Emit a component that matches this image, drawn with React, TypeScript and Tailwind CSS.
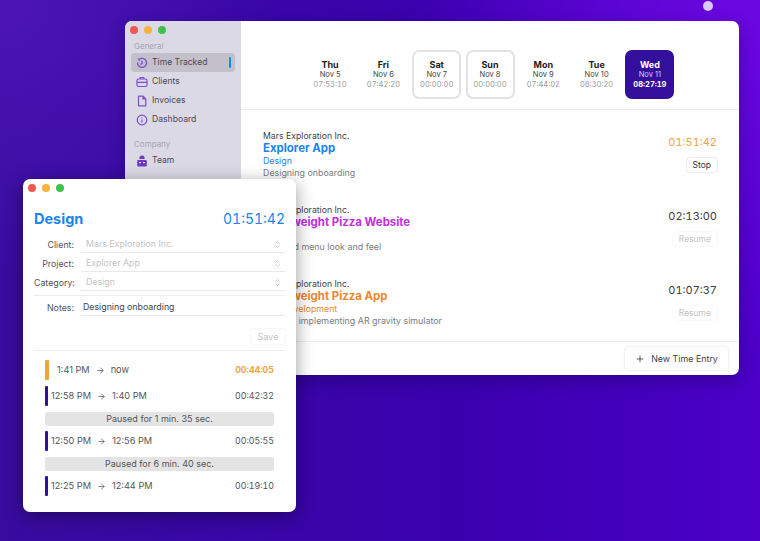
import { ChevronsUpDown, ArrowRight, Plus } from "lucide-react";

const days = [
  { d: "Thu", n: "Nov 5", t: "07:53:10" },
  { d: "Fri", n: "Nov 6", t: "07:42:20" },
  { d: "Sat", n: "Nov 7", t: "00:00:00", off: true },
  { d: "Sun", n: "Nov 8", t: "00:00:00", off: true },
  { d: "Mon", n: "Nov 9", t: "07:44:02" },
  { d: "Tue", n: "Nov 10", t: "08:30:20" },
  { d: "Wed", n: "Nov 11", t: "08:27:19", active: true },
];

const entries = [
  { client: "Mars Exploration Inc.", project: "Explorer App", color: "text-[#1b84ec]", cat: "Design", note: "Designing onboarding", time: "01:51:42", timeColor: "text-[#efa445]", btn: "Stop" },
  { client: "Mars Exploration Inc.", project: "Lightweight Pizza Website", color: "text-[#c42de0]", cat: "", note: "Updated menu look and feel", time: "02:13:00", timeColor: "text-[#3c3c3c]", btn: "Resume" },
  { client: "Mars Exploration Inc.", project: "Lightweight Pizza App", color: "text-[#f0862c]", cat: "App Development", note: "Testing, implementing AR gravity simulator", time: "01:07:37", timeColor: "text-[#3c3c3c]", btn: "Resume" },
];

const segments = [
  { from: "12:58 PM", to: "1:40 PM", time: "00:42:32", pause: "Paused for 1 min. 35 sec." },
  { from: "12:50 PM", to: "12:56 PM", time: "00:05:55", pause: "Paused for 6 min. 40 sec." },
  { from: "12:25 PM", to: "12:44 PM", time: "00:19:10", pause: "" },
];

function Lights() {
  return (
    <div className="flex gap-[6px]">
      <span className="w-[8px] h-[8px] rounded-full bg-[#f0584f]" />
      <span className="w-[8px] h-[8px] rounded-full bg-[#f5b33f]" />
      <span className="w-[8px] h-[8px] rounded-full bg-[#3fc14d]" />
    </div>
  );
}

function ClockIcon() {
  return (
    <svg width="12" height="12" viewBox="0 0 12 12" fill="none" stroke="#7c4fd0" strokeWidth="1.3">
      <path d="M3 2.6A4.5 4.5 0 1 1 1.6 5.4" />
      <path d="M1.7 1.6L3.4 2.4L3 4.2" strokeWidth="1" />
      <path d="M6 3.8V6.5L4.4 7.4" />
    </svg>
  );
}
function BriefcaseIcon() {
  return (
    <svg width="12" height="12" viewBox="0 0 12 12" fill="none" stroke="#7c4fd0" strokeWidth="1.2">
      <rect x="1" y="3" width="10" height="7.5" rx="1.5" />
      <path d="M1 6.3H11M4.2 3V1.6H7.8V3" />
    </svg>
  );
}
function DocIcon() {
  return (
    <svg width="12" height="12" viewBox="0 0 12 12" fill="none" stroke="#7c4fd0" strokeWidth="1.2">
      <path d="M2.5 1.2H7.2L9.8 3.8V10.8H2.5Z" strokeLinejoin="round" />
      <path d="M7 1.2V4H9.8" fill="#7c4fd0" />
    </svg>
  );
}
function GaugeIcon() {
  return (
    <svg width="12" height="12" viewBox="0 0 12 12" fill="none" stroke="#7c4fd0" strokeWidth="1.2">
      <circle cx="6" cy="6" r="4.8" />
      <path d="M6 5.5V8.4M6 3.6V4.2" />
    </svg>
  );
}
function TeamIcon() {
  return (
    <svg width="12" height="13" viewBox="0 0 12 13" fill="#6a3cc4">
      <path d="M3.4 4.2a2.6 2.6 0 0 1 5.2 0V5H3.4Z" />
      <rect x="1.2" y="6" width="9.6" height="6.4" rx="1" />
      <rect x="3" y="8" width="2" height="1.2" fill="#dcd9e6" />
      <rect x="7" y="8" width="2" height="1.2" fill="#dcd9e6" />
    </svg>
  );
}

function NavItem({ icon, label, active }: { icon: React.ReactNode; label: string; active?: boolean }) {
  return (
    <div className={`h-[19px] mx-[6px] pl-[5px] pr-[4px] rounded-[4px] flex items-center gap-[4px] text-[8.6px] text-[#4b4953] ${active ? "bg-[#c3c0cb]" : ""}`}>
      <span className="w-[12px] flex justify-center">{icon}</span>
      <span className="flex-1">{label}</span>
      {active && <span className="w-[2px] h-[11px] rounded-full bg-[#1b84ec]" />}
    </div>
  );
}

function FormRow({ label, value, select }: { label: string; value: string; select?: boolean }) {
  return (
    <div className="flex items-center gap-[7px] h-[19px]">
      <span className="w-[40px] text-right text-[8.8px] text-[#55535a]">{label}</span>
      <div className={`flex-1 h-[17px] flex items-center justify-between pr-[3px] border-b border-[#e9e9e9] text-[8.8px] ${select ? "pl-[5px] text-[#c4c4c4]" : "pl-[2px] text-[#444]"}`}>
        <span>{value}</span>
        {select && <ChevronsUpDown size={9} color="#bbbbbb" />}
      </div>
    </div>
  );
}

export default function App() {
  return (
    <div
      className="relative w-[760px] h-[541px] overflow-hidden bg-[radial-gradient(circle_at_100%_0%,#6c08e2,transparent_38%),radial-gradient(circle_at_0%_0%,#4d14b6,transparent_30%),linear-gradient(90deg,#370c9e,#3a00ae_60%,#4c00c8)]"
      style={{ fontFamily: "Inter, 'Liberation Sans', sans-serif" }}
    >
      <div className="absolute left-[703px] top-[1px] w-[10px] h-[10px] rounded-full bg-[#d8c8f5]" />

      {/* Main window */}
      <div className="absolute left-[125px] top-[21px] w-[614px] h-[354px] rounded-[7px] overflow-hidden bg-white flex shadow-[0_6px_16px_rgba(20,0,70,0.35)]">
        <aside className="w-[116px] shrink-0 bg-[#dcd9e6]">
          <div className="pl-[5px] pt-[5px]"><Lights /></div>
          <div className="pl-[9px] mt-[6px] mb-[1px] text-[8px] text-[#a7a4b1]">General</div>
          <NavItem icon={<ClockIcon />} label="Time Tracked" active />
          <NavItem icon={<BriefcaseIcon />} label="Clients" />
          <NavItem icon={<DocIcon />} label="Invoices" />
          <NavItem icon={<GaugeIcon />} label="Dashboard" />
          <div className="pl-[9px] mt-[9px] mb-[1px] text-[8px] text-[#a7a4b1]">Company</div>
          <NavItem icon={<TeamIcon />} label="Team" />
        </aside>

        <main className="flex-1 flex flex-col min-w-0">
          <div className="h-[89px] shrink-0 flex items-start justify-center gap-[4.3px] pt-[29px] border-b border-[#ececec]">
            {days.map((x) => (
              <div
                key={x.d}
                className={`w-[49px] h-[49px] rounded-[7px] flex flex-col items-center justify-center ${x.active ? "bg-[#330f9c] text-white" : x.off ? "border-2 border-[#e2e2e2]" : ""}`}
              >
                <span className={`text-[9px] leading-[11px] font-bold ${x.active ? "" : "text-[#222]"}`}>{x.d}</span>
                <span className={`text-[7.5px] leading-[10px] ${x.active ? "text-[#d5cdf3]" : "text-[#444]"}`}>{x.n}</span>
                <span className={`text-[7.5px] leading-[10px] tabular-nums ${x.active ? "font-bold" : "text-[#9a9a9a]"}`}>{x.t}</span>
              </div>
            ))}
          </div>

          <div className="flex-1 min-h-0 overflow-hidden pt-[21px] pl-[22px] pr-[22px]">
            {entries.map((e) => (
              <div key={e.project} className="h-[74px] flex justify-between">
                <div>
                  <div className="text-[8.7px] leading-[11px] text-[#3f3f3f]">{e.client}</div>
                  <div className={`text-[11.4px] leading-[13px] font-bold ${e.color}`}>{e.project}</div>
                  <div className={`text-[8.8px] leading-[12px] h-[12px] ${e.color}`}>{e.cat}</div>
                  <div className="text-[8.9px] leading-[12px] text-[#7c7c7c]">{e.note}</div>
                </div>
                <div className="flex flex-col items-end">
                  <div className={`text-[11px] leading-[15px] mt-[4px] tabular-nums ${e.timeColor}`}>{e.time}</div>
                  <div className={`mt-[8px] h-[14px] px-[6px] flex items-center rounded-[3px] text-[8.5px] ${e.btn === "Stop" ? "text-[#333] shadow-[0_0_2px_rgba(0,0,0,0.25)]" : "text-[#c4c4c4] shadow-[0_0_2px_rgba(0,0,0,0.08)]"}`}>
                    {e.btn}
                  </div>
                </div>
              </div>
            ))}
          </div>

          <div className="h-[34px] shrink-0 border-t border-[#ececec] flex items-center justify-end pr-[11px]">
            <div className="h-[23px] w-[103px] rounded-[4px] flex items-center justify-center gap-[6px] text-[8.9px] text-[#3f3f3f] shadow-[0_0_2px_rgba(0,0,0,0.2)]">
              <Plus size={10} color="#444" />
              New Time Entry
            </div>
          </div>
        </main>
      </div>

      {/* Design window */}
      <div className="absolute left-[23px] top-[179px] w-[273px] h-[333px] rounded-[7px] bg-white px-[11px] shadow-[0_4px_18px_rgba(0,0,0,0.4)]">
        <div className="pt-[5px] -ml-[6px]"><Lights /></div>
        <div className="mt-[18px] flex items-center justify-between">
          <span className="text-[14.5px] leading-[18px] font-bold text-[#1b84ec]">Design</span>
          <span className="text-[14px] leading-[18px] tabular-nums text-[#1b84ec]">01:51:42</span>
        </div>
        <div className="mt-[7px]">
          <FormRow label="Client:" value="Mars Exploration Inc." select />
          <FormRow label="Project:" value="Explorer App" select />
          <FormRow label="Category:" value="Design" select />
        </div>
        <div className="mt-[3px] pt-[2px] border-t border-[#eeeeee]">
          <FormRow label="Notes:" value="Designing onboarding" />
        </div>
        <div className="mt-[12px] flex justify-end">
          <div className="w-[34px] h-[15px] rounded-[3px] flex items-center justify-center text-[9px] text-[#c4c4c4] shadow-[0_0_2px_rgba(0,0,0,0.12)]">Save</div>
        </div>
        <div className="mt-[6px] pt-[9px] border-t border-[#eeeeee] pl-[11px] pr-[11px]">
          <div className="h-[20px] mb-[6px] flex items-center text-[9.2px] text-[#555]">
            <span className="w-[4px] h-[20px] rounded-[1px] bg-[#f2a23a] mr-[8px]" />
            <span>1:41 PM</span>
            <ArrowRight size={9} className="mx-[6px]" />
            <span className="flex-1">now</span>
            <span className="text-[8.8px] font-bold text-[#efa445] tabular-nums">00:44:05</span>
          </div>
          {segments.map((s) => (
            <div key={s.from}>
              <div className="h-[20px] flex items-center text-[9.2px] text-[#555]">
                <span className="w-[3px] h-[20px] rounded-[1px] bg-[#33109c] mr-[3px]" />
                <span>{s.from}</span>
                <ArrowRight size={9} className="mx-[6px]" />
                <span className="flex-1">{s.to}</span>
                <span className="text-[8.8px] tabular-nums">{s.time}</span>
              </div>
              {s.pause && (
                <div className="mt-[6px] mb-[5px] h-[14px] rounded-[3px] bg-[#e4e4e4] flex items-center justify-center text-[9px] text-[#555]">{s.pause}</div>
              )}
            </div>
          ))}
        </div>
      </div>
    </div>
  );
}
